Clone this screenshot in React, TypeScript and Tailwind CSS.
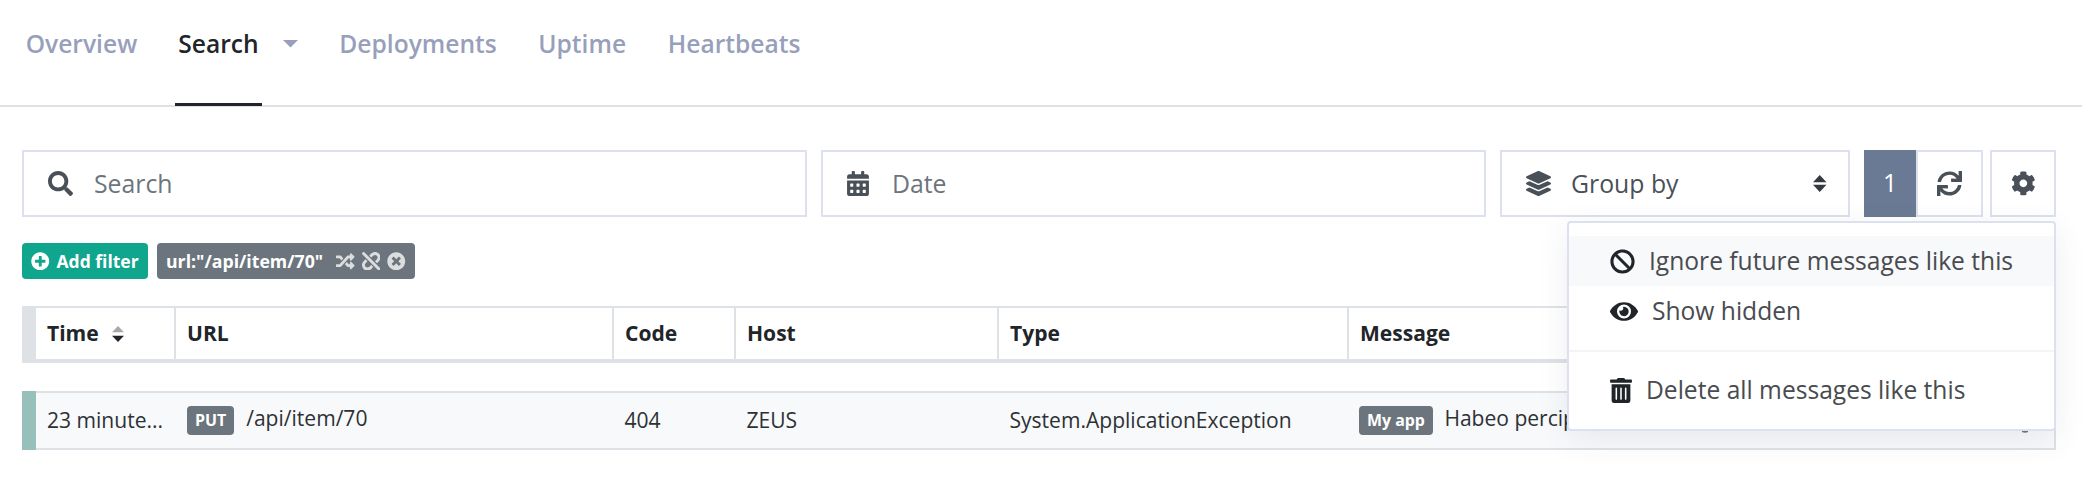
import React from "react";
import type { ReactNode } from "react";
import {
  FaBan,
  FaCalendarAlt,
  FaCog,
  FaEye,
  FaLayerGroup,
  FaPlusCircle,
  FaRandom,
  FaSearch,
  FaSync,
  FaTimesCircle,
  FaTrashAlt,
  FaUnlink,
} from "react-icons/fa";

function Nav() {
  return (
    <nav className="flex h-[107px] border-b-2 border-[#dee2e6] pl-[25.7px] text-[24.6px] leading-[37px] font-semibold text-[#989fbb]">
      <a className="w-[149.3px] pt-[25px]">Overview</a>
      <a className="h-[106px] w-[87px] shrink-0 border-b-[3px] border-[#212529] pt-[25px] text-center text-[#212529]">
        Search
      </a>
      <svg className="mt-[40px] ml-[21px] h-[7.5px] w-[15px]" viewBox="0 0 15 7.5" fill="currentColor">
        <path d="M0 0H15L7.5 7.5Z" />
      </svg>
      <a className="ml-[41.3px] w-[199px] pt-[25px]">Deployments</a>
      <a className="w-[129.5px] pt-[25px]">Uptime</a>
      <a className="pt-[25px]">Heartbeats</a>
    </nav>
  );
}

function MenuItem({ icon, label, active }: { icon: ReactNode; label: string; active?: boolean }) {
  return (
    <div className={`flex h-[50px] items-center gap-[14px] pl-[41px] ${active ? "bg-[#f8f9fb]" : ""}`}>
      <span className="text-[#212529]">{icon}</span>
      <span className="pb-[2px] whitespace-nowrap">{label}</span>
    </div>
  );
}

function SettingsMenu() {
  return (
    <div className="absolute top-[71px] right-0 z-10 h-[210px] w-[489px] rounded-[4px] border-2 border-[#dde0ee] bg-white pt-[13px] text-[24.6px] leading-[37px] text-[#484b4f] shadow-[0_8px_32px_rgba(60,70,90,0.09)]">
      <MenuItem active icon={<FaBan className="h-[25px] w-[25px]" />} label="Ignore future messages like this" />
      <MenuItem icon={<FaEye className="h-[25px] w-[28px]" />} label="Show hidden" />
      <div className="mt-[14px] mb-[13px] h-[2px] bg-[#f3f4f6]" />
      <MenuItem icon={<FaTrashAlt className="h-[25px] w-[22px]" />} label="Delete all messages like this" />
    </div>
  );
}

function Toolbar() {
  return (
    <div className="mt-[43px] flex h-[67px] text-[24.8px] leading-[37px] text-[#6c757d]">
      <div className="flex w-[785px] items-center border-2 border-[#dde0ee] pl-[24px]">
        <FaSearch className="text-[25px] text-[#495057]" />
        <span className="ml-[21px]">Search</span>
      </div>
      <div className="ml-[14px] flex w-[665px] items-center border-2 border-[#dde0ee] pl-[23.5px]">
        <FaCalendarAlt className="h-[25px] w-[22px] text-[#495057]" />
        <span className="ml-[23.5px]">Date</span>
      </div>
      <div className="ml-[14px] flex w-[350px] items-center border-2 border-[#dde0ee] pl-[24px] text-[#495057]">
        <FaLayerGroup className="text-[25px]" />
        <span className="ml-[20px]">Group by</span>
        <svg className="mr-[21.5px] ml-auto h-[17px] w-[13.5px]" viewBox="0 0 13.5 17" fill="#343a40">
          <path d="M0 7.2H13.5L6.75 0ZM0 9.8H13.5L6.75 17Z" />
        </svg>
      </div>
      <div className="ml-[14px] flex w-[52px] items-center justify-center bg-[#6b7a94] pb-[3px] text-white">1</div>
      <div className="flex w-[67px] items-center justify-center border-2 border-[#dde0ee] text-[#495057]">
        <FaSync className="text-[25px]" />
      </div>
      <div className="relative ml-[7px] flex w-[66px] items-center justify-center border-2 border-[#dde0ee] text-[#495057]">
        <FaCog className="text-[24.7px]" />
        <div className="absolute -top-[2px] -right-[2px]">
          <SettingsMenu />
        </div>
      </div>
    </div>
  );
}

function Filters() {
  return (
    <div className="mt-[26px] flex h-[36px] gap-[9px] text-[17.5px] leading-[36px] font-bold text-white">
      <div className="flex w-[126px] items-center rounded-[4px] bg-[#10a58d] pl-[9px]">
        <FaPlusCircle className="text-[18.5px]" />
        <span className="ml-[7px] whitespace-nowrap">Add filter</span>
      </div>
      <div className="flex w-[258px] items-center rounded-[4px] bg-[#6c757d] pl-[9px] text-[17.7px]">
        <span className="w-[170px] whitespace-nowrap">url:"/api/item/70"</span>
        <span className="flex gap-[7px] text-[18.5px] text-[#dcdddf]">
          <FaRandom />
          <FaUnlink />
          <FaTimesCircle />
        </span>
      </div>
    </div>
  );
}

const columns = "grid grid-cols-[14px_140px_438px_122px_263px_350px_1fr]";

function HeaderCell({ label, children }: { label: string; children?: ReactNode }) {
  return (
    <div className="flex items-center border-r-2 border-[#dee2e6] pl-[11px]">
      <span className="pb-[2px]">{label}</span>
      {children}
    </div>
  );
}

function Badge({ children }: { children: ReactNode }) {
  return (
    <span className="flex h-[29px] items-center rounded-[4px] bg-[#6c757d] px-[8px] pb-[2px] text-[15.9px] font-bold whitespace-nowrap text-white">
      {children}
    </span>
  );
}

function Results() {
  return (
    <div className="text-[21.05px] leading-[32px] text-[#212529]">
      <div className={`${columns} mt-[27px] h-[57px] border-t-2 border-b-4 border-[#dee2e6] font-bold`}>
        <div className="bg-[#dee2e6]" />
        <HeaderCell label="Time">
          <svg className="ml-[13px] h-[16px] w-[12px]" viewBox="0 0 12 16">
            <path d="M0 6.3H12L6 0Z" fill="#a6a8aa" />
            <path d="M0 9.7H12L6 16Z" fill="#212529" />
          </svg>
        </HeaderCell>
        <HeaderCell label="URL" />
        <HeaderCell label="Code" />
        <HeaderCell label="Host" />
        <HeaderCell label="Type" />
        <HeaderCell label="Message" />
      </div>
      <div className={`${columns} mt-[28px] h-[59px] bg-[#f8f9fb] text-[#2d3135]`}>
        <div className="bg-[#97c0ba]" />
        <div className="flex items-center border-y-2 border-[#dee2e6] pb-[2px] pl-[11px]">23 minute...</div>
        <div className="flex items-center border-y-2 border-[#dee2e6] pl-[11px]">
          <Badge>PUT</Badge>
          <span className="ml-[12px] pb-[6px]">/api/item/70</span>
        </div>
        <div className="flex items-center border-y-2 border-[#dee2e6] pb-[2px] pl-[10.5px]">404</div>
        <div className="flex items-center border-y-2 border-[#dee2e6] pb-[2px] pl-[10.5px]">ZEUS</div>
        <div className="flex items-center border-y-2 border-[#dee2e6] pb-[2px] pl-[10.5px]">
          System.ApplicationException
        </div>
        <div className="flex items-center border-y-2 border-r-2 border-[#dee2e6] pl-[10px]">
          <Badge>My app</Badge>
          <span className="ml-[11.5px] pb-[6px]">Habeo percip</span>
          <FaCog className="mr-[17px] ml-auto text-[24px] text-[#6c757d]" />
        </div>
      </div>
    </div>
  );
}

export default function App() {
  return (
    <div className="h-[491px] overflow-hidden bg-white font-['Open_Sans','Noto_Sans',sans-serif]">
      <Nav />
      <main className="pr-[26px] pl-[22px]">
        <Toolbar />
        <Filters />
        <Results />
      </main>
    </div>
  );
}
